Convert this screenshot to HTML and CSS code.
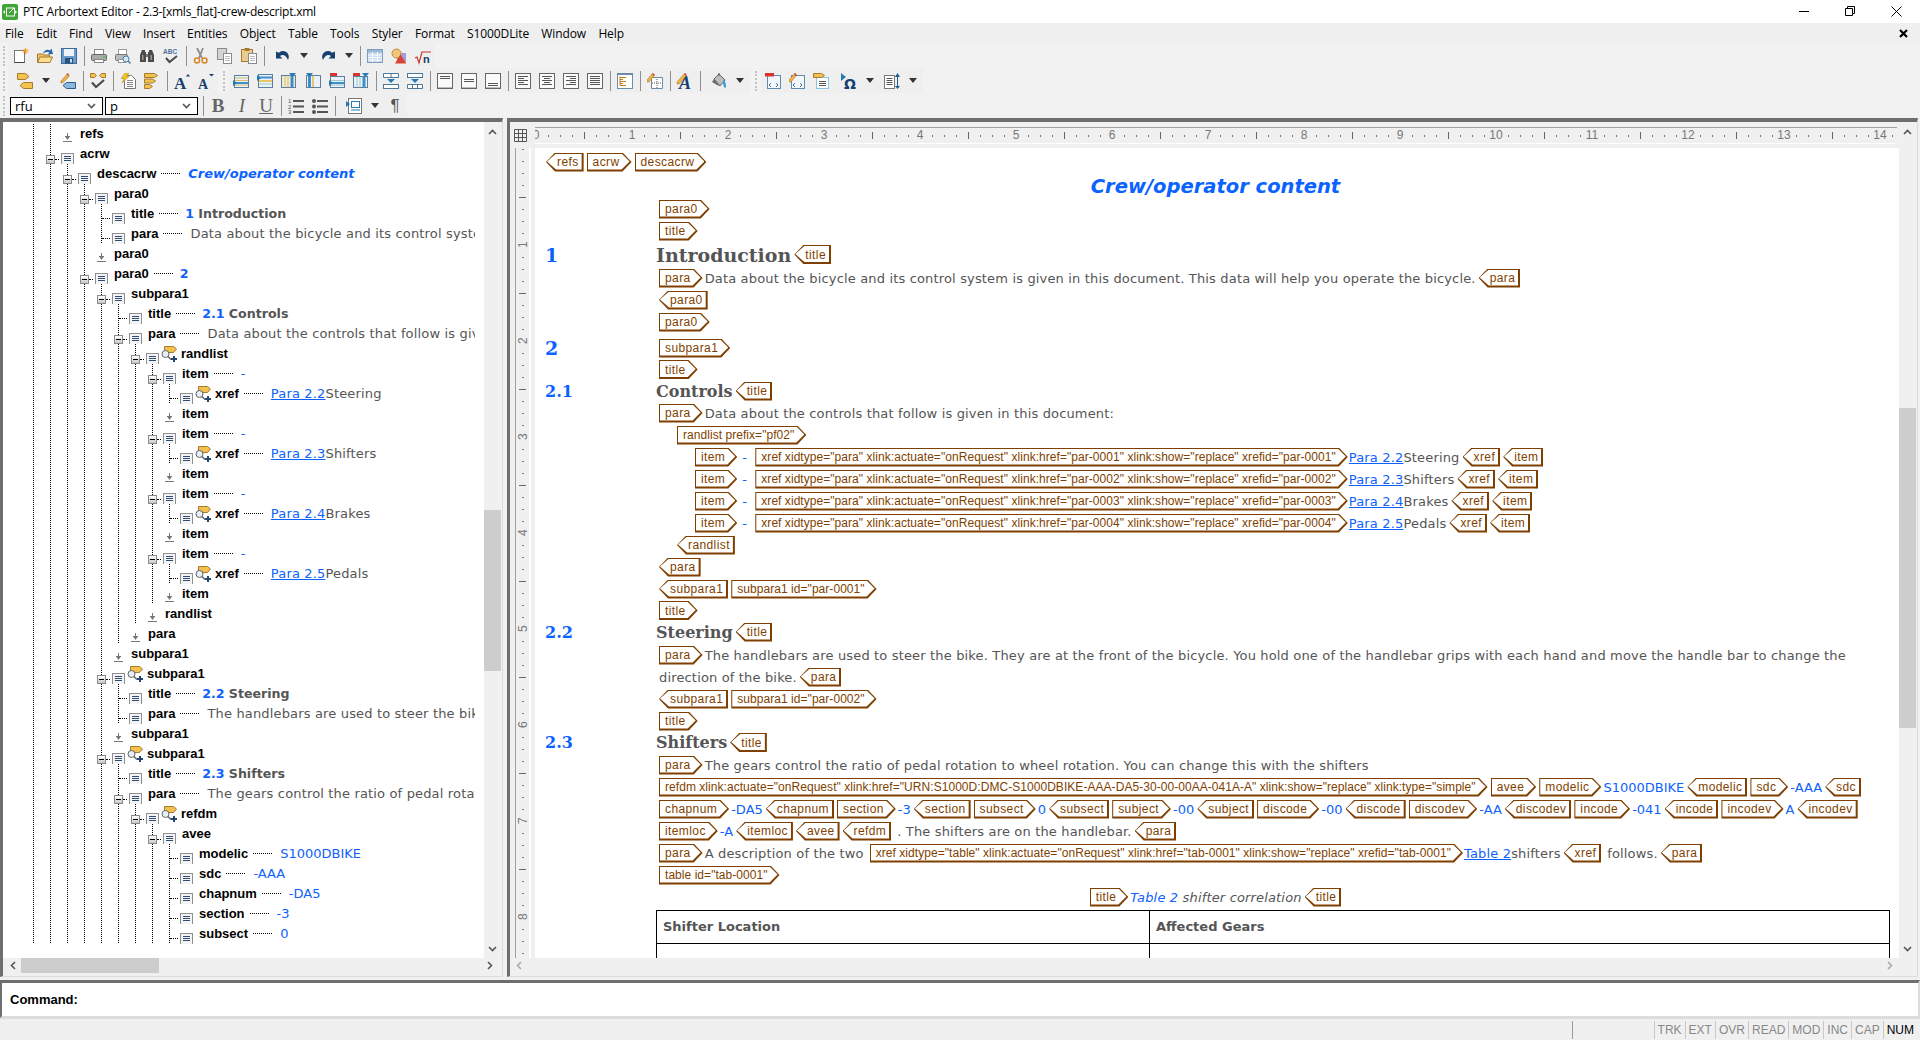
FILE: index.html
```html
<!DOCTYPE html>
<html lang="en">
<head>
    <meta charset="UTF-8">
    <title>PTC Arbortext Editor - 2.3-[xmls_flat]-crew-descript.xml</title>
    <link rel="stylesheet" href="styles.css">
</head>
<body>
<svg class="defs" width="0" height="0">
    <symbol id="i-new" viewBox="0 0 16 16"><rect x="1.500" y="2.500" width="10" height="12" fill="#fff" stroke="#777"/><path d="M1.500 14.500h10" stroke="#444"/><path d="M12.500 0v6M9.500 3h6M10.500 1l4 4M14.500 1l-4 4" stroke="#f39a1e"/></symbol>
    <symbol id="i-open" viewBox="0 0 16 16"><path d="M.5 6h5l1 1h6v7.500H.5z" fill="#eec165" stroke="#a9792c"/><path d="M.5 14.500l2.500-5.500h12.500l-2.500 5.500z" fill="#fbdc90" stroke="#a9792c"/><path d="M6 6c1-4 4.500-5 7-3.500L14.500.5 16 6l-5 .5 1.200-2c-2-1-4.200-.5-6.200 1.500z" fill="#2a6aa8"/></symbol>
    <symbol id="i-save" viewBox="0 0 16 16"><rect x=".5" y=".5" width="15" height="15" fill="#6a9bd0" stroke="#3e6c9c"/><rect x="3" y="1" width="10" height="7" fill="#eef3f9"/><rect x="4" y="10" width="8" height="5.500" fill="#28517c"/><rect x="9" y="11" width="2" height="3.500" fill="#cfdcea"/></symbol>
    <symbol id="i-print" viewBox="0 0 16 16"><rect x="3.500" y="1.500" width="9" height="5" fill="#fff" stroke="#888"/><rect x=".5" y="6.500" width="15" height="6" rx="1" fill="#aaa" stroke="#666"/><rect x="3.500" y="11.500" width="9" height="3" fill="#fff" stroke="#888"/><rect x="12" y="8" width="2" height="1.500" fill="#5b5"/></symbol>
    <symbol id="i-preview" viewBox="0 0 16 16"><rect x="3.500" y="1.500" width="8" height="5" fill="#fff" stroke="#999"/><rect x=".5" y="6.500" width="12" height="6" rx="1" fill="#bbb" stroke="#777"/><rect x="3.500" y="11.500" width="7" height="3" fill="#fff" stroke="#999"/><circle cx="11" cy="11" r="3" fill="#d6e8f6" stroke="#4a7ea8"/><path d="M13 13l2.500 2.500" stroke="#4a7ea8" stroke-width="1.500"/></symbol>
    <symbol id="i-binoc" viewBox="0 0 16 16"><path d="M3 2h3v2h1v10H1V7z" fill="#4b4b4b"/><path d="M13 2h-3v2H9v10h6V7z" fill="#4b4b4b"/><rect x="7" y="6" width="2" height="3" fill="#777"/><rect x="3" y="7" width="1.500" height="5" fill="#999"/><rect x="11.500" y="7" width="1.500" height="5" fill="#999"/></symbol>
    <symbol id="i-cut" viewBox="0 0 16 16"><path d="M4 0l5 10M10 0L6 10" stroke="#8d8d8d" stroke-width="1.800"/><circle cx="4" cy="12.500" r="2.500" fill="none" stroke="#d8862a" stroke-width="1.500"/><circle cx="11.500" cy="12.500" r="2.500" fill="none" stroke="#d8862a" stroke-width="1.500"/></symbol>
    <symbol id="i-copy" viewBox="0 0 16 16"><rect x=".5" y=".5" width="9" height="11" fill="#d4d4d4" stroke="#8a8a8a"/><rect x="6.500" y="5.500" width="8" height="10" fill="#fff" stroke="#8a8a8a"/><path d="M8 8.500h5M8 10.500h5M8 12.500h5" stroke="#bbb"/></symbol>
    <symbol id="i-paste" viewBox="0 0 16 16"><rect x=".5" y="1.500" width="11" height="12" fill="#eccb8e" stroke="#a87a30"/><rect x="3.500" y="0" width="5" height="3" fill="#a87a30"/><rect x="7.500" y="5.500" width="8" height="10" fill="#fff" stroke="#8a8a8a"/><path d="M9 8.500h5M9 10.500h5M9 12.500h5" stroke="#bbb"/></symbol>
    <symbol id="i-undo" viewBox="0 0 16 16"><path d="M1 3.500v7h6.500L5 8c2.500-1.800 6-1 8 4 2.500-5-1-9-5-9-1.500 0-3 .5-4 1.800z" fill="#17406f"/></symbol>
    <symbol id="i-redo" viewBox="0 0 16 16"><path d="M15 3.500v7H8.500L11 8C8.500 6.200 5 7 3 12 .5 7 4 3 8 3c1.500 0 3 .5 4 1.800z" fill="#17406f"/></symbol>
    <symbol id="i-table" viewBox="0 0 16 16"><rect x=".5" y="1.500" width="15" height="13" fill="#c6daf0" stroke="#7f9cbc"/><rect x="1" y="2" width="14" height="2.500" fill="#98b8da"/><path d="M1 7h14M1 9.500h14M1 12h14M5.500 4v10M10.500 4v10" stroke="#fff"/></symbol>
    <symbol id="i-object" viewBox="0 0 16 16"><rect x="6" y="5" width="9" height="10" fill="#a79ad6"/><circle cx="5.500" cy="5.500" r="4.500" fill="#f2c679" stroke="#c08a35"/><path d="M4 15.500l5.500-9 5.500 9z" fill="#d9432f"/></symbol>
    <symbol id="i-tags" viewBox="0 0 16 16"><path d="M.5 .5h8l3.500 3-3.500 3h-8z" fill="#f2c14e" stroke="#a87a30"/><path d="M15.500 9.500h-9L3 12.500l3.500 3h9z" fill="#f2c14e" stroke="#a87a30"/></symbol>
    <symbol id="i-pentag" viewBox="0 0 16 16"><path d="M15.500 9.500h-9L3 12.500l3.500 3h9z" fill="#8db7dc" stroke="#2f5f8a"/><path d="M1 8l6-6.500 2 2L3 9.500 1 10z" fill="#f2b544" stroke="#9a6a1e" stroke-width=".6"/><path d="M6.500 1l1-1 2 2-1 1z" fill="#d9432f"/></symbol>
    <symbol id="i-checktags" viewBox="0 0 16 16"><path d="M.5 .5h4l2 2-2 2h-4z" fill="#f2c14e" stroke="#a87a30"/><path d="M15.500 .5h-4l-2 2 2 2h4z" fill="#f2c14e" stroke="#a87a30"/><path d="M2 9.500l4 4.500 8-7" fill="none" stroke="#4a4a4a" stroke-width="2.200"/></symbol>
    <symbol id="i-bolt" viewBox="0 0 16 16"><path d="M4.500 2.500h7l4 4v9h-11z" fill="#fff" stroke="#777"/><path d="M7 7.500h6M7 9.500h6M7 11.500h6M7 13.500h6" stroke="#888"/><path d="M5 0h4L6.500 3.500H9L2 10l2-4.500H1z" fill="#f5c518" stroke="#a87a30" stroke-width=".5"/></symbol>
    <symbol id="i-taglist" viewBox="0 0 16 16"><path d="M.5 .5h10l3 2-3 2H.5z" fill="#f2c14e" stroke="#a87a30"/><path d="M.5 6h8l3 2-3 2h-8z" fill="#f2c14e" stroke="#a87a30"/><path d="M.5 11.500h5l3 2-3 2h-5z" fill="#f2c14e" stroke="#a87a30"/></symbol>
    <symbol id="i-row1" viewBox="0 0 16 16"><rect x="1.500" y="2.500" width="14" height="12" fill="#eaf1f8" stroke="#5c7f9f"/><path d="M2 5h13M2 7.500h13M2 12h13" stroke="#d8ba64"/><path d="M2 10h13" stroke="#3e8ecb" stroke-width="2"/><path d="M0 7l4 3-4 3z" fill="#2679b5"/></symbol>
    <symbol id="i-row2" viewBox="0 0 16 16"><rect x="1.500" y="1.500" width="14" height="13" fill="#eaf1f8" stroke="#5c7f9f"/><path d="M2 4.500h13" stroke="#3e8ecb" stroke-width="2"/><path d="M2 8h13" stroke="#e8c768" stroke-width="2"/><path d="M2 11h13" stroke="#9cc"/><path d="M0 2l4 3-4 3z" fill="#2679b5"/></symbol>
    <symbol id="i-col1" viewBox="0 0 16 16"><rect x=".5" y="2.500" width="14" height="12" fill="#f2ecd6" stroke="#5c7f9f"/><path d="M4 3v11M7 3v11" stroke="#d8ba64"/><path d="M11 3v11" stroke="#3e8ecb" stroke-width="3"/><path d="M8 0h7l-3.500 4z" fill="#2679b5"/></symbol>
    <symbol id="i-col2" viewBox="0 0 16 16"><rect x="1.500" y="2.500" width="14" height="12" fill="#eaf1f8" stroke="#5c7f9f"/><path d="M4.500 3v11" stroke="#3e8ecb" stroke-width="3"/><path d="M8 3v11" stroke="#e8c768" stroke-width="2"/><path d="M1 0h7L4.500 4z" fill="#2679b5"/></symbol>
    <symbol id="i-row3" viewBox="0 0 16 16"><rect x="1.500" y="3.500" width="14" height="11" fill="#eaf1f8" stroke="#5c7f9f"/><path d="M2 7.500h13M2 12h13" stroke="#9cc"/><path d="M2 10h13" stroke="#3e8ecb" stroke-width="2"/><path d="M0 7l4 3-4 3z" fill="#2679b5"/><rect x="1" y="0" width="7" height="3" fill="#d9332f"/></symbol>
    <symbol id="i-col3" viewBox="0 0 16 16"><rect x=".5" y="3.500" width="14" height="11" fill="#eaf1f8" stroke="#5c7f9f"/><path d="M4 4v10M7 4v10" stroke="#9cc"/><path d="M11 4v10" stroke="#3e8ecb" stroke-width="3"/><path d="M9 0h7l-3.500 4z" fill="#2679b5"/><rect x="0" y="0" width="7" height="3" fill="#d9332f"/></symbol>
    <symbol id="i-split1" viewBox="0 0 16 16"><path d="M.5 .5h15v4H.5zM8 .5v4" fill="#fff" stroke="#4a7896"/><rect x=".5" y="11.500" width="15" height="4" fill="#fff" stroke="#4a7896"/><path d="M4 6h8l-4 4z" fill="#2679b5"/></symbol>
    <symbol id="i-split2" viewBox="0 0 16 16"><rect x=".5" y=".5" width="15" height="4" fill="#fff" stroke="#4a7896"/><path d="M.5 11.500h15v4H.5zM5.500 11.500v4M10.500 11.500v4" fill="#fff" stroke="#4a7896"/><path d="M4 6h8l-4 4z" fill="#2679b5"/></symbol>
    <symbol id="i-vt" viewBox="0 0 16 16"><rect x=".5" y=".5" width="15" height="15" fill="#fafafa" stroke="#666"/><path d="M3 3.500h10M3 5.500h10" stroke="#555"/><path d="M1 14.500h14" stroke="#bbb"/></symbol>
    <symbol id="i-vm" viewBox="0 0 16 16"><rect x=".5" y=".5" width="15" height="15" fill="#fafafa" stroke="#666"/><path d="M3 6.500h10M3 8.500h10" stroke="#555"/><path d="M1 14.500h14" stroke="#bbb"/></symbol>
    <symbol id="i-vb" viewBox="0 0 16 16"><rect x=".5" y=".5" width="15" height="15" fill="#fafafa" stroke="#666"/><path d="M3 10.500h10M3 12.500h10" stroke="#555"/><path d="M1 14.500h14" stroke="#bbb"/></symbol>
    <symbol id="i-al" viewBox="0 0 16 16"><rect x=".5" y=".5" width="15" height="15" fill="#fafafa" stroke="#666"/><path d="M3 3.500h10M3 5.500h6M3 7.500h10M3 9.500h6M3 11.500h10" stroke="#555"/></symbol>
    <symbol id="i-ac" viewBox="0 0 16 16"><rect x=".5" y=".5" width="15" height="15" fill="#fafafa" stroke="#666"/><path d="M3 3.500h10M5 5.500h6M3 7.500h10M5 9.500h6M3 11.500h10" stroke="#555"/></symbol>
    <symbol id="i-ar" viewBox="0 0 16 16"><rect x=".5" y=".5" width="15" height="15" fill="#fafafa" stroke="#666"/><path d="M3 3.500h10M7 5.500h6M3 7.500h10M7 9.500h6M3 11.500h10" stroke="#555"/></symbol>
    <symbol id="i-aj" viewBox="0 0 16 16"><rect x=".5" y=".5" width="15" height="15" fill="#fafafa" stroke="#666"/><path d="M3 3.500h10M3 5.500h10M3 7.500h10M3 9.500h10M3 11.500h10" stroke="#555"/></symbol>
    <symbol id="i-block" viewBox="0 0 16 16"><rect x=".5" y=".5" width="15" height="15" fill="#fff" stroke="#6d8aa6"/><path d="M1 1h14" stroke="#6d8aa6" stroke-width="2"/><path d="M3 3.500v9M3 4.500h6M3 6.500h3M3 8.500h6M3 10.500h3M3 12.500h6" stroke="#c27b1a"/></symbol>
    <symbol id="i-pentable" viewBox="0 0 16 16"><path d="M4.500 4.500h11v11h-11z" fill="#fff" stroke="#6d8aa6"/><path d="M10 6v9M5 10h10" stroke="#555" stroke-dasharray="1 1"/><path d="M0 7l5-6 2 2-5 6H0z" fill="#f2b544" stroke="#9a6a1e" stroke-width=".5"/><path d="M5 0.500l1-.5 2 2-1 1z" fill="#d9332f"/></symbol>
    <symbol id="i-bucket" viewBox="0 0 16 16"><path d="M3 6l5-5 6 6-5 6z" fill="#bdbdbd" stroke="#666"/><path d="M3 6l6 7-3-1-5-3z" fill="#6a6a6a"/><path d="M8 3V0" stroke="#555"/><path d="M12 7c3 1 3.500 6 2.500 8-2 0-2.500-4-2.500-8z" fill="#3a9bd8"/></symbol>
    <symbol id="i-docdel" viewBox="0 0 16 16"><rect x="2.500" y="2.500" width="13" height="13" fill="#f2f7fb" stroke="#5f8bb0"/><path d="M6 10l-2 2 2 2M11 10l2 2-2 2" fill="none" stroke="#46779f"/><rect x="0" y="0" width="9" height="3.500" fill="#d9332f"/></symbol>
    <symbol id="i-docpen" viewBox="0 0 16 16"><rect x="2.500" y="2.500" width="13" height="13" fill="#f2f7fb" stroke="#5f8bb0"/><path d="M6 10l-2 2 2 2M11 10l2 2-2 2" fill="none" stroke="#46779f"/><path d="M0 7l5-6 2 2-5 6H0z" fill="#f2b544" stroke="#9a6a1e" stroke-width=".5"/><path d="M5 .5l1-.5 2 2-1 1z" fill="#d9332f"/></symbol>
    <symbol id="i-tagbox" viewBox="0 0 16 16"><rect x="3.500" y="4.500" width="12" height="11" fill="#fff" stroke="#1f8fd0" stroke-dasharray="1 1"/><path d="M6 8.500h7M6 10.500h7M6 12.500h7" stroke="#555"/><path d="M.5 .5h8l3 2-3 2h-8z" fill="#f2c14e" stroke="#a87a30"/></symbol>
    <symbol id="i-spacing" viewBox="0 0 16 16"><rect x=".5" y="2.500" width="10" height="13" fill="#fff" stroke="#777"/><path d="M2.500 5.500h6M2.500 7.500h6M2.500 9.500h6M2.500 11.500h6" stroke="#555"/><path d="M13.500 2v12" stroke="#1d5f8a"/><path d="M11 4l2.500-4L16 4zM11 13h5l-2.500 3z" fill="#1d5f8a"/></symbol>
    <symbol id="i-indent" viewBox="0 0 16 16"><rect x="2.500" y=".5" width="13" height="15" fill="#fff" stroke="#777"/><rect x="5.500" y="3.500" width="8" height="6" fill="none" stroke="#2679b5"/><path d="M5 12h9" stroke="#2679b5"/><path d="M0 3l4 3-4 3z" fill="#2679b5"/></symbol>
    <symbol id="i-ul" viewBox="0 0 16 16"><circle cx="2" cy="3" r="2" fill="#555"/><circle cx="2" cy="8.500" r="2" fill="#555"/><circle cx="2" cy="14" r="2" fill="#555"/><path d="M5 3h11M5 8.500h11M5 14h11" stroke="#555" stroke-width="2"/></symbol>
    <symbol id="i-node" viewBox="0 0 13 12"><rect x=".5" y=".5" width="12" height="11" fill="#f4f4f4" stroke="#8f8f8f"/><path d="M.5 11.500h12" stroke="#666"/><path d="M3 3.500h7M3 5.500h7M3 7.500h7" stroke="#2d4a78"/></symbol>
    <symbol id="i-mag" viewBox="0 0 16 16"><path d="M3.500 .5h9l3 2.500-3 3.500h-9z" fill="#f2c14e" stroke="#a87a30"/><circle cx="4.500" cy="8" r="3.500" fill="#e6eef6" stroke="#666"/><path d="M7 10.500l3 3" stroke="#666" stroke-width="1.500"/><path d="M13 10v6M10 13h6" stroke="#24476f" stroke-width="2"/></symbol>
    <symbol id="i-end" viewBox="0 0 9 9"><path d="M0 8.500h9M2 3.500h5M4.500 0v3" stroke="#777"/><path d="M2 3.500h5L4.500 7z" fill="#777"/></symbol>
    <symbol id="c-up" viewBox="0 0 9 6"><path d="M1 5l3.500-3.500L8 5" fill="none" stroke="#555" stroke-width="1.600"/></symbol>
    <symbol id="c-down" viewBox="0 0 9 6"><path d="M1 1l3.500 3.500L8 1" fill="none" stroke="#555" stroke-width="1.600"/></symbol>
    <symbol id="c-left" viewBox="0 0 6 9"><path d="M5 1L1.500 4.500 5 8" fill="none" stroke="#555" stroke-width="1.600"/></symbol>
    <symbol id="c-right" viewBox="0 0 6 9"><path d="M1 1l3.500 3.500L1 8" fill="none" stroke="#555" stroke-width="1.600"/></symbol>
</svg>

<div class="titlebar">
    <svg class="appicon" viewBox="0 0 16 16"><rect width="16" height="16" rx="2" fill="#3fa535"/><rect x="4.500" y="4" width="8" height="8" fill="none" stroke="#fff"/><path d="M1 8l2-2v4zM15 8l-2-2v4z" fill="#fff"/><path d="M7 9l5-5" stroke="#fff"/></svg>
    <span class="wintitle">PTC Arbortext Editor - 2.3-[xmls_flat]-crew-descript.xml</span>
    <div class="wincontrols">
        <span class="winbtn"><svg width="10" height="10"><path d="M0 5.500h10" stroke="#000"/></svg></span>
        <span class="winbtn"><svg width="10" height="10"><path d="M.5 2.500h7v7h-7zM2.500 2.500v-2h7v7h-2" fill="none" stroke="#000"/></svg></span>
        <span class="winbtn"><svg width="11" height="11"><path d="M.5 .5l10 10M10.500 .5l-10 10" stroke="#000"/></svg></span>
    </div>
</div>

<div class="menubar">
    <span>File</span><span>Edit</span><span>Find</span><span>View</span><span>Insert</span><span>Entities</span><span>Object</span><span>Table</span><span>Tools</span><span>Styler</span><span>Format</span><span>S1000DLite</span><span>Window</span><span>Help</span>
    <svg class="docclose" width="9" height="9"><path d="M1 1l7 7M8 1L1 8" stroke="#000" stroke-width="2.200"/></svg>
</div>

<div class="toolbars">
    <div class="tbrow">
        <i class="grip"></i>
        <div class="tb tb1">
            <span class="tool"><svg><use href="#i-new"/></svg></span><span class="tool"><svg><use href="#i-open"/></svg></span><span class="tool"><svg><use href="#i-save"/></svg></span>
            <i class="sep"></i>
            <span class="tool"><svg><use href="#i-print"/></svg></span><span class="tool"><svg><use href="#i-preview"/></svg></span><span class="tool"><svg><use href="#i-binoc"/></svg></span><span class="tool"><svg viewBox="0 0 16 16"><text x="0" y="6" class="svg-abc">ABC</text><path d="M3 10l3.500 4L14 8" fill="none" stroke="#4a4a4a" stroke-width="2"/></svg></span>
            <i class="sep"></i>
            <span class="tool"><svg><use href="#i-cut"/></svg></span><span class="tool"><svg><use href="#i-copy"/></svg></span><span class="tool"><svg><use href="#i-paste"/></svg></span>
            <i class="sep"></i>
            <span class="tool wide"><svg><use href="#i-undo"/></svg></span><i class="drop long"></i><span class="tool"><svg><use href="#i-redo"/></svg></span><i class="drop tight"></i>
            <i class="sep"></i>
            <span class="tool"><svg><use href="#i-table"/></svg></span><span class="tool"><svg><use href="#i-object"/></svg></span><span class="tool"><svg viewBox="0 0 16 16"><path d="M0 10l2-1 2 6L7 4h9" fill="none" stroke="#c0392b" stroke-width="1.200"/><text x="8" y="14.500" class="svg-n">n</text></svg></span>
        </div>
    </div>
    <div class="tbrow">
        <i class="grip"></i>
        <div class="tb tb2">
            <span class="tool"><svg><use href="#i-tags"/></svg></span><i class="drop"></i><span class="tool"><svg><use href="#i-pentag"/></svg></span>
            <i class="sep"></i>
            <span class="tool"><svg><use href="#i-checktags"/></svg></span>
            <i class="sep"></i>
            <span class="tool"><svg><use href="#i-bolt"/></svg></span><span class="tool"><svg><use href="#i-taglist"/></svg></span>
            <i class="sep"></i>
            <span class="tool"><svg viewBox="0 0 16 16"><text x="0" y="15.500" class="svg-a">A</text><path d="M12 3.500l2-2.500 2 2.500z" fill="#17406f"/></svg></span><span class="tool"><svg viewBox="0 0 16 16"><text x="0" y="15.500" class="svg-a2">A</text><path d="M11 1h5l-2.500 2.500z" fill="#17406f"/></svg></span>
        </div>
        <i class="grip gap"></i>
        <div class="tb tb3">
            <span class="tool"><svg><use href="#i-row1"/></svg></span><span class="tool"><svg><use href="#i-row2"/></svg></span><span class="tool"><svg><use href="#i-col1"/></svg></span><span class="tool"><svg><use href="#i-col2"/></svg></span><span class="tool"><svg><use href="#i-row3"/></svg></span><span class="tool"><svg><use href="#i-col3"/></svg></span>
            <i class="sep"></i>
            <span class="tool"><svg><use href="#i-split1"/></svg></span><span class="tool"><svg><use href="#i-split2"/></svg></span>
            <i class="sep"></i>
            <span class="tool"><svg><use href="#i-vt"/></svg></span><span class="tool"><svg><use href="#i-vm"/></svg></span><span class="tool"><svg><use href="#i-vb"/></svg></span>
            <i class="sep"></i>
            <span class="tool"><svg><use href="#i-al"/></svg></span><span class="tool"><svg><use href="#i-ac"/></svg></span><span class="tool"><svg><use href="#i-ar"/></svg></span><span class="tool"><svg><use href="#i-aj"/></svg></span>
            <i class="sep"></i>
            <span class="tool"><svg><use href="#i-block"/></svg></span>
            <i class="sep"></i>
            <span class="tool"><svg><use href="#i-pentable"/></svg></span>
            <i class="sep"></i>
            <span class="tool"><svg viewBox="0 0 16 16"><text x="2" y="15.500" class="svg-ai">A</text><path d="M0 9l7-8 2 2-7 8H0z" fill="#f2b544" stroke="#9a6a1e" stroke-width=".5"/><path d="M7 .500l1-.5 2 2-1 1z" fill="#d9332f"/></svg></span>
            <i class="sep"></i>
            <span class="tool wide"><svg><use href="#i-bucket"/></svg></span><i class="drop"></i>
        </div>
        <i class="grip gap"></i>
        <div class="tb tb4">
            <span class="tool"><svg><use href="#i-docdel"/></svg></span><span class="tool"><svg><use href="#i-docpen"/></svg></span><span class="tool"><svg><use href="#i-tagbox"/></svg></span><span class="tool wide"><svg viewBox="0 0 16 16"><path d="M0 0l5 4-5 4z" fill="#2679b5"/><text x="3" y="16" class="svg-om">Ω</text></svg></span><i class="drop"></i><span class="tool"><svg><use href="#i-spacing"/></svg></span><i class="drop"></i>
        </div>
    </div>
    <div class="tbrow">
        <i class="grip"></i>
        <div class="tb tb5">
            <div class="combo"><span>rfu</span><svg width="9" height="6"><use href="#c-down"/></svg></div>
            <div class="combo"><span>p</span><svg width="9" height="6"><use href="#c-down"/></svg></div>
            <i class="sep"></i>
            <span class="tool fmt bold">B</span><span class="tool fmt ital">I</span><span class="tool fmt under">U</span>
            <i class="sep"></i>
            <span class="tool"><svg viewBox="0 0 16 16"><text x="0" y="5" class="svg-num">1</text><text x="0" y="10.500" class="svg-num">2</text><text x="0" y="16" class="svg-num">3</text><path d="M5 3h11M5 8.500h11M5 14h11" stroke="#555" stroke-width="2"/></svg></span><span class="tool"><svg><use href="#i-ul"/></svg></span>
            <i class="sep"></i>
            <span class="tool wide"><svg><use href="#i-indent"/></svg></span><i class="drop"></i>
            <span class="tool fmt pilcrow">¶</span>
        </div>
    </div>
</div>

<div class="workspace">
    <div class="pane tree-pane">
        <div class="pane-top">
            <div class="tree">
                <div class="row"><i class="g"></i><i class="g"></i><i class="mk"><svg><use href="#i-end"/></svg></i><b class="lb">refs</b></div>
                <div class="row"><i class="g"></i><i class="x"><b></b></i><i class="n"><svg><use href="#i-node"/></svg></i><b class="lb">acrw</b></div>
                <div class="row"><i class="g"></i><i class="g"></i><i class="x"><b></b></i><i class="n"><svg><use href="#i-node"/></svg></i><b class="lb">descacrw</b><i class="lead"></i><span class="val title-val">Crew/operator content</span></div>
                <div class="row"><i class="g"></i><i class="g"></i><i class="g"></i><i class="x"><b></b></i><i class="n"><svg><use href="#i-node"/></svg></i><b class="lb">para0</b></div>
                <div class="row"><i class="g"></i><i class="g"></i><i class="g"></i><i class="g"></i><i class="h"></i><i class="n"><svg><use href="#i-node"/></svg></i><b class="lb">title</b><i class="lead"></i><span class="val bd"><span class="blue">1</span> Introduction</span></div>
                <div class="row"><i class="g"></i><i class="g"></i><i class="g"></i><i class="g"></i><i class="h"></i><i class="n"><svg><use href="#i-node"/></svg></i><b class="lb">para</b><i class="lead"></i><span class="val">Data about the bicycle and its control system is given</span></div>
                <div class="row"><i class="g"></i><i class="g"></i><i class="g"></i><i class="g"></i><i class="mk"><svg><use href="#i-end"/></svg></i><b class="lb">para0</b></div>
                <div class="row"><i class="g"></i><i class="g"></i><i class="g"></i><i class="x"><b></b></i><i class="n"><svg><use href="#i-node"/></svg></i><b class="lb">para0</b><i class="lead"></i><span class="val bd blue">2</span></div>
                <div class="row"><i class="g"></i><i class="g"></i><i class="g"></i><i class="g"></i><i class="x"><b></b></i><i class="n"><svg><use href="#i-node"/></svg></i><b class="lb">subpara1</b></div>
                <div class="row"><i class="g"></i><i class="g"></i><i class="g"></i><i class="g"></i><i class="g"></i><i class="h"></i><i class="n"><svg><use href="#i-node"/></svg></i><b class="lb">title</b><i class="lead"></i><span class="val bd"><span class="blue">2.1</span> Controls</span></div>
                <div class="row"><i class="g"></i><i class="g"></i><i class="g"></i><i class="g"></i><i class="g"></i><i class="x"><b></b></i><i class="n"><svg><use href="#i-node"/></svg></i><b class="lb">para</b><i class="lead"></i><span class="val">Data about the controls that follow is given in this</span></div>
                <div class="row"><i class="g"></i><i class="g"></i><i class="g"></i><i class="g"></i><i class="g"></i><i class="g"></i><i class="x"><b></b></i><i class="n"><svg><use href="#i-node"/></svg></i><svg class="mag"><use href="#i-mag"/></svg><b class="lb">randlist</b></div>
                <div class="row"><i class="g"></i><i class="g"></i><i class="g"></i><i class="g"></i><i class="g"></i><i class="g"></i><i class="g"></i><i class="x"><b></b></i><i class="n"><svg><use href="#i-node"/></svg></i><b class="lb">item</b><i class="lead"></i><span class="val blue">-</span></div>
                <div class="row"><i class="g"></i><i class="g"></i><i class="g"></i><i class="g"></i><i class="g"></i><i class="g"></i><i class="g"></i><i class="g"></i><i class="h"></i><i class="n"><svg><use href="#i-node"/></svg></i><svg class="mag"><use href="#i-mag"/></svg><b class="lb">xref</b><i class="lead"></i><span class="val"><u class="link">Para 2.2</u>Steering</span></div>
                <div class="row"><i class="g"></i><i class="g"></i><i class="g"></i><i class="g"></i><i class="g"></i><i class="g"></i><i class="g"></i><i class="g"></i><i class="mk"><svg><use href="#i-end"/></svg></i><b class="lb">item</b></div>
                <div class="row"><i class="g"></i><i class="g"></i><i class="g"></i><i class="g"></i><i class="g"></i><i class="g"></i><i class="g"></i><i class="x"><b></b></i><i class="n"><svg><use href="#i-node"/></svg></i><b class="lb">item</b><i class="lead"></i><span class="val blue">-</span></div>
                <div class="row"><i class="g"></i><i class="g"></i><i class="g"></i><i class="g"></i><i class="g"></i><i class="g"></i><i class="g"></i><i class="g"></i><i class="h"></i><i class="n"><svg><use href="#i-node"/></svg></i><svg class="mag"><use href="#i-mag"/></svg><b class="lb">xref</b><i class="lead"></i><span class="val"><u class="link">Para 2.3</u>Shifters</span></div>
                <div class="row"><i class="g"></i><i class="g"></i><i class="g"></i><i class="g"></i><i class="g"></i><i class="g"></i><i class="g"></i><i class="g"></i><i class="mk"><svg><use href="#i-end"/></svg></i><b class="lb">item</b></div>
                <div class="row"><i class="g"></i><i class="g"></i><i class="g"></i><i class="g"></i><i class="g"></i><i class="g"></i><i class="g"></i><i class="x"><b></b></i><i class="n"><svg><use href="#i-node"/></svg></i><b class="lb">item</b><i class="lead"></i><span class="val blue">-</span></div>
                <div class="row"><i class="g"></i><i class="g"></i><i class="g"></i><i class="g"></i><i class="g"></i><i class="g"></i><i class="g"></i><i class="g"></i><i class="h"></i><i class="n"><svg><use href="#i-node"/></svg></i><svg class="mag"><use href="#i-mag"/></svg><b class="lb">xref</b><i class="lead"></i><span class="val"><u class="link">Para 2.4</u>Brakes</span></div>
                <div class="row"><i class="g"></i><i class="g"></i><i class="g"></i><i class="g"></i><i class="g"></i><i class="g"></i><i class="g"></i><i class="g"></i><i class="mk"><svg><use href="#i-end"/></svg></i><b class="lb">item</b></div>
                <div class="row"><i class="g"></i><i class="g"></i><i class="g"></i><i class="g"></i><i class="g"></i><i class="g"></i><i class="g"></i><i class="x"><b></b></i><i class="n"><svg><use href="#i-node"/></svg></i><b class="lb">item</b><i class="lead"></i><span class="val blue">-</span></div>
                <div class="row"><i class="g"></i><i class="g"></i><i class="g"></i><i class="g"></i><i class="g"></i><i class="g"></i><i class="g"></i><i class="g"></i><i class="h"></i><i class="n"><svg><use href="#i-node"/></svg></i><svg class="mag"><use href="#i-mag"/></svg><b class="lb">xref</b><i class="lead"></i><span class="val"><u class="link">Para 2.5</u>Pedals</span></div>
                <div class="row"><i class="g"></i><i class="g"></i><i class="g"></i><i class="g"></i><i class="g"></i><i class="g"></i><i class="g"></i><i class="g"></i><i class="mk"><svg><use href="#i-end"/></svg></i><b class="lb">item</b></div>
                <div class="row"><i class="g"></i><i class="g"></i><i class="g"></i><i class="g"></i><i class="g"></i><i class="g"></i><i class="g"></i><i class="mk"><svg><use href="#i-end"/></svg></i><b class="lb">randlist</b></div>
                <div class="row"><i class="g"></i><i class="g"></i><i class="g"></i><i class="g"></i><i class="g"></i><i class="g"></i><i class="mk"><svg><use href="#i-end"/></svg></i><b class="lb">para</b></div>
                <div class="row"><i class="g"></i><i class="g"></i><i class="g"></i><i class="g"></i><i class="g"></i><i class="mk"><svg><use href="#i-end"/></svg></i><b class="lb">subpara1</b></div>
                <div class="row"><i class="g"></i><i class="g"></i><i class="g"></i><i class="g"></i><i class="x"><b></b></i><i class="n"><svg><use href="#i-node"/></svg></i><svg class="mag"><use href="#i-mag"/></svg><b class="lb">subpara1</b></div>
                <div class="row"><i class="g"></i><i class="g"></i><i class="g"></i><i class="g"></i><i class="g"></i><i class="h"></i><i class="n"><svg><use href="#i-node"/></svg></i><b class="lb">title</b><i class="lead"></i><span class="val bd"><span class="blue">2.2</span> Steering</span></div>
                <div class="row"><i class="g"></i><i class="g"></i><i class="g"></i><i class="g"></i><i class="g"></i><i class="h"></i><i class="n"><svg><use href="#i-node"/></svg></i><b class="lb">para</b><i class="lead"></i><span class="val">The handlebars are used to steer the bike. They are</span></div>
                <div class="row"><i class="g"></i><i class="g"></i><i class="g"></i><i class="g"></i><i class="g"></i><i class="mk"><svg><use href="#i-end"/></svg></i><b class="lb">subpara1</b></div>
                <div class="row"><i class="g"></i><i class="g"></i><i class="g"></i><i class="g"></i><i class="x"><b></b></i><i class="n"><svg><use href="#i-node"/></svg></i><svg class="mag"><use href="#i-mag"/></svg><b class="lb">subpara1</b></div>
                <div class="row"><i class="g"></i><i class="g"></i><i class="g"></i><i class="g"></i><i class="g"></i><i class="h"></i><i class="n"><svg><use href="#i-node"/></svg></i><b class="lb">title</b><i class="lead"></i><span class="val bd"><span class="blue">2.3</span> Shifters</span></div>
                <div class="row"><i class="g"></i><i class="g"></i><i class="g"></i><i class="g"></i><i class="g"></i><i class="x"><b></b></i><i class="n"><svg><use href="#i-node"/></svg></i><b class="lb">para</b><i class="lead"></i><span class="val">The gears control the ratio of pedal rotation to wheel</span></div>
                <div class="row"><i class="g"></i><i class="g"></i><i class="g"></i><i class="g"></i><i class="g"></i><i class="g"></i><i class="x"><b></b></i><i class="n"><svg><use href="#i-node"/></svg></i><svg class="mag"><use href="#i-mag"/></svg><b class="lb">refdm</b></div>
                <div class="row"><i class="g"></i><i class="g"></i><i class="g"></i><i class="g"></i><i class="g"></i><i class="g"></i><i class="g"></i><i class="x"><b></b></i><i class="n"><svg><use href="#i-node"/></svg></i><b class="lb">avee</b></div>
                <div class="row"><i class="g"></i><i class="g"></i><i class="g"></i><i class="g"></i><i class="g"></i><i class="g"></i><i class="g"></i><i class="g"></i><i class="h"></i><i class="n"><svg><use href="#i-node"/></svg></i><b class="lb">modelic</b><i class="lead"></i><span class="val blue">S1000DBIKE</span></div>
                <div class="row"><i class="g"></i><i class="g"></i><i class="g"></i><i class="g"></i><i class="g"></i><i class="g"></i><i class="g"></i><i class="g"></i><i class="h"></i><i class="n"><svg><use href="#i-node"/></svg></i><b class="lb">sdc</b><i class="lead"></i><span class="val blue">-AAA</span></div>
                <div class="row"><i class="g"></i><i class="g"></i><i class="g"></i><i class="g"></i><i class="g"></i><i class="g"></i><i class="g"></i><i class="g"></i><i class="h"></i><i class="n"><svg><use href="#i-node"/></svg></i><b class="lb">chapnum</b><i class="lead"></i><span class="val blue">-DA5</span></div>
                <div class="row"><i class="g"></i><i class="g"></i><i class="g"></i><i class="g"></i><i class="g"></i><i class="g"></i><i class="g"></i><i class="g"></i><i class="h"></i><i class="n"><svg><use href="#i-node"/></svg></i><b class="lb">section</b><i class="lead"></i><span class="val blue">-3</span></div>
                <div class="row"><i class="g"></i><i class="g"></i><i class="g"></i><i class="g"></i><i class="g"></i><i class="g"></i><i class="g"></i><i class="g"></i><i class="h"></i><i class="n"><svg><use href="#i-node"/></svg></i><b class="lb">subsect</b><i class="lead"></i><span class="val blue">0</span></div>
            </div>
            <div class="vbar">
                <svg class="chev" width="9" height="6"><use href="#c-up"/></svg>
                <div class="vthumb left-thumb"></div>
                <svg class="chev end" width="9" height="6"><use href="#c-down"/></svg>
            </div>
        </div>
        <div class="hbar">
            <svg class="chev" width="6" height="9"><use href="#c-left"/></svg>
            <div class="hthumb"></div>
            <svg class="chev end" width="6" height="9"><use href="#c-right"/></svg>
        </div>
    </div>

    <div class="pane doc-pane">
        <div class="pane-top">
            <div class="doc-body">
                <div class="ruler-row">
                    <div class="corner"><svg width="13" height="13"><path d="M.5 .5h12v12H.5zM.5 4.500h12M.5 8.500h12M4.500 .5v12M8.500 .5v12" fill="none" stroke="#555"/></svg></div>
                    <div class="hruler"><span>0</span><span>1</span><span>2</span><span>3</span><span>4</span><span>5</span><span>6</span><span>7</span><span>8</span><span>9</span><span>10</span><span>11</span><span>12</span><span>13</span><span>14</span></div>
                </div>
                <div class="doc-row">
                    <div class="vruler"><div class="vruler-in"><span>1</span><span>2</span><span>3</span><span>4</span><span>5</span><span>6</span><span>7</span><span>8</span></div></div>
                    <div class="doc">
                        <div class="ln top"><span class="tag e">refs</span><span class="tag s">acrw</span><span class="tag s">descacrw</span></div>
                        <div class="ln main-title">Crew/operator content</div>
                        <div class="ln ind"><span class="tag s">para0</span></div>
                        <div class="ln ind"><span class="tag s">title</span></div>
                        <div class="ln hd h1"><span class="num">1</span><span class="hd-text">Introduction</span><span class="tag e">title</span></div>
                        <div class="ln ind"><span class="tag s">para</span><span class="t">Data about the bicycle and its control system is given in this document. This data will help you operate the bicycle.</span><span class="tag e">para</span></div>
                        <div class="ln ind"><span class="tag e">para0</span></div>
                        <div class="ln ind"><span class="tag s">para0</span></div>
                        <div class="ln hd h2"><span class="num">2</span><span class="tag s">subpara1</span></div>
                        <div class="ln ind short"><span class="tag s">title</span></div>
                        <div class="ln hd h3"><span class="num sm">2.1</span><span class="hd-text sm">Controls</span><span class="tag e">title</span></div>
                        <div class="ln ind"><span class="tag s">para</span><span class="t">Data about the controls that follow is given in this document:</span></div>
                        <div class="ln ind2"><span class="tag s nar">randlist prefix="pf02"</span></div>
                        <div class="ln ind3"><span class="tag s">item</span><span class="t blue dash">-</span><span class="tag s nar">xref xidtype="para" xlink:actuate="onRequest" xlink:href="par-0001" xlink:show="replace" xrefid="par-0001"</span><span class="t"><u class="link">Para 2.2</u>Steering</span><span class="tag e">xref</span><span class="tag e">item</span></div>
                        <div class="ln ind3"><span class="tag s">item</span><span class="t blue dash">-</span><span class="tag s nar">xref xidtype="para" xlink:actuate="onRequest" xlink:href="par-0002" xlink:show="replace" xrefid="par-0002"</span><span class="t"><u class="link">Para 2.3</u>Shifters</span><span class="tag e">xref</span><span class="tag e">item</span></div>
                        <div class="ln ind3"><span class="tag s">item</span><span class="t blue dash">-</span><span class="tag s nar">xref xidtype="para" xlink:actuate="onRequest" xlink:href="par-0003" xlink:show="replace" xrefid="par-0003"</span><span class="t"><u class="link">Para 2.4</u>Brakes</span><span class="tag e">xref</span><span class="tag e">item</span></div>
                        <div class="ln ind3"><span class="tag s">item</span><span class="t blue dash">-</span><span class="tag s nar">xref xidtype="para" xlink:actuate="onRequest" xlink:href="par-0004" xlink:show="replace" xrefid="par-0004"</span><span class="t"><u class="link">Para 2.5</u>Pedals</span><span class="tag e">xref</span><span class="tag e">item</span></div>
                        <div class="ln ind2"><span class="tag e">randlist</span></div>
                        <div class="ln ind"><span class="tag e">para</span></div>
                        <div class="ln ind"><span class="tag e">subpara1</span><span class="tag s nar">subpara1 id="par-0001"</span></div>
                        <div class="ln ind short"><span class="tag s">title</span></div>
                        <div class="ln hd"><span class="num sm">2.2</span><span class="hd-text sm">Steering</span><span class="tag e">title</span></div>
                        <div class="ln ind push"><span class="tag s">para</span><span class="t">The handlebars are used to steer the bike. They are at the front of the bicycle. You hold one of the handlebar grips with each hand and move the handle bar to change the</span></div>
                        <div class="ln ind"><span class="t">direction of the bike.</span><span class="tag e">para</span></div>
                        <div class="ln ind"><span class="tag e">subpara1</span><span class="tag s nar">subpara1 id="par-0002"</span></div>
                        <div class="ln ind"><span class="tag s">title</span></div>
                        <div class="ln hd short"><span class="num sm">2.3</span><span class="hd-text sm">Shifters</span><span class="tag e">title</span></div>
                        <div class="ln ind push"><span class="tag s">para</span><span class="t">The gears control the ratio of pedal rotation to wheel rotation. You can change this with the shifters</span></div>
                        <div class="ln ind"><span class="tag s nar">refdm xlink:actuate="onRequest" xlink:href="URN:S1000D:DMC-S1000DBIKE-AAA-DA5-30-00-00AA-041A-A" xlink:show="replace" xlink:type="simple"</span><span class="tag s">avee</span><span class="tag s">modelic</span><span class="t blue">S1000DBIKE</span><span class="tag e">modelic</span><span class="tag s">sdc</span><span class="t blue">-AAA</span><span class="tag e">sdc</span></div>
                        <div class="ln ind"><span class="tag s">chapnum</span><span class="t blue">-DA5</span><span class="tag e">chapnum</span><span class="tag s">section</span><span class="t blue">-3</span><span class="tag e">section</span><span class="tag s">subsect</span><span class="t blue">0</span><span class="tag e">subsect</span><span class="tag s">subject</span><span class="t blue">-00</span><span class="tag e">subject</span><span class="tag s">discode</span><span class="t blue">-00</span><span class="tag e">discode</span><span class="tag s">discodev</span><span class="t blue">-AA</span><span class="tag e">discodev</span><span class="tag s">incode</span><span class="t blue">-041</span><span class="tag e">incode</span><span class="tag s">incodev</span><span class="t blue">A</span><span class="tag e">incodev</span></div>
                        <div class="ln ind"><span class="tag s">itemloc</span><span class="t blue">-A</span><span class="tag e">itemloc</span><span class="tag e">avee</span><span class="tag e">refdm</span><span class="t sp">. The shifters are on the handlebar.</span><span class="tag e">para</span></div>
                        <div class="ln ind"><span class="tag s">para</span><span class="t">A description of the two</span><span class="tag s nar sp">xref xidtype="table" xlink:actuate="onRequest" xlink:href="tab-0001" xlink:show="replace" xrefid="tab-0001"</span><span class="t"><u class="link">Table 2</u>shifters</span><span class="tag e">xref</span><span class="t sp">follows.</span><span class="tag e">para</span></div>
                        <div class="ln ind"><span class="tag s nar">table id="tab-0001"</span></div>
                        <div class="ln centered"><span class="tag s">title</span><span class="t cap"><span class="blue">Table 2</span> shifter correlation</span><span class="tag e">title</span></div>
                        <div class="shift-table">
                            <div class="cell">Shifter Location</div>
                            <div class="cell">Affected Gears</div>
                            <div class="cell"></div>
                            <div class="cell"></div>
                        </div>
                    </div>
                </div>
            </div>
            <div class="vbar doc-vbar">
                <svg class="chev" width="9" height="6"><use href="#c-up"/></svg>
                <div class="vthumb right-thumb"></div>
                <svg class="chev end" width="9" height="6"><use href="#c-down"/></svg>
            </div>
        </div>
        <div class="hbar doc-hbar">
            <svg class="chev faint" width="6" height="9"><use href="#c-left"/></svg>
            <svg class="chev end faint" width="6" height="9"><use href="#c-right"/></svg>
        </div>
    </div>
</div>

<div class="command"><b>Command:</b></div>

<div class="status">
    <span class="st-first"></span>
    <span>TRK</span><span>EXT</span><span>OVR</span><span>READ</span><span>MOD</span><span>INC</span><span>CAP</span><span class="on">NUM</span>
</div>
</body>
</html>
```

FILE: styles.css
```css
* {
    margin: 0;
    padding: 0;
    box-sizing: border-box;
}

body {
    width: 1920px;
    height: 1040px;
    overflow: hidden;
    background: #f0f0f0;
    display: flex;
    flex-direction: column;
    font-family: "Liberation Sans", Arial, sans-serif;
    color: #000;
}

.defs {
    position: absolute;
}

i {
    font-style: normal;
}

/* title + menu */
.titlebar {
    height: 23px;
    background: #fff;
    display: flex;
    align-items: center;
    flex: none;
}

.appicon {
    width: 16px;
    height: 16px;
    margin: 0 5px 0 2px;
}

.wintitle {
    font-family: "Open Sans", sans-serif;
    font-size: 12px;
    letter-spacing: -0.23px;
}

.wincontrols {
    margin-left: auto;
    margin-right: 1px;
    display: flex;
}

.winbtn {
    width: 46px;
    display: flex;
    justify-content: center;
}

.menubar {
    height: 20px;
    background: #efefef;
    display: flex;
    align-items: center;
    flex: none;
    padding-left: 5px;
    font-family: "Open Sans", sans-serif;
    font-size: 12px;
    letter-spacing: -0.1px;
}

.menubar span {
    margin-right: 12.3px;
}

.docclose {
    margin-left: auto;
    margin-right: 12px;
}

/* toolbars */
.toolbars {
    height: 75px;
    background: #f2f2f2;
    flex: none;
}

.tbrow {
    height: 25px;
    display: flex;
    align-items: center;
}

.grip {
    width: 3px;
    height: 20px;
    margin: 0 2px 0 3px;
    border-left: 2px dotted #c4c4c4;
    flex: none;
}

.grip.gap {
    margin: 0 3px 0 5px;
}

.tb {
    display: flex;
    align-items: center;
    height: 25px;
    background: #efefef;
}

.tool {
    width: 24px;
    height: 22px;
    display: flex;
    align-items: center;
    justify-content: center;
    flex: none;
}

.tool.wide {
    margin-left: 4px;
}

.tool svg {
    width: 16px;
    height: 16px;
    overflow: visible;
}

.sep {
    width: 1px;
    height: 20px;
    background: #8f8f8f;
    margin: 0 2px 0 3px;
    flex: none;
}

.drop {
    width: 0;
    height: 0;
    border: 4px solid transparent;
    border-top: 5px solid #333;
    border-bottom: 0;
    margin: 0 6px 0 5px;
    flex: none;
}

.drop.long {
    margin-right: 8px;
}

.drop.tight {
    margin-right: 4px;
}

.combo {
    width: 93px;
    height: 18px;
    border: 1px solid #000;
    background: #fff;
    margin-right: 2px;
    padding: 0 6px 0 4px;
    display: flex;
    align-items: center;
    justify-content: space-between;
    font-family: "Open Sans", sans-serif;
    font-size: 13px;
}

.tb1 {
    padding-left: 1px;
}

.tb2 {
    padding-left: 5px;
}

.tb5 {
    padding-left: 2px;
}

.fmt {
    font-family: "Liberation Serif", serif;
    font-size: 19px;
    color: #666;
}

.fmt.bold {
    font-weight: bold;
}

.fmt.ital {
    font-style: italic;
}

.fmt.under {
    text-decoration: underline;
}

.fmt.pilcrow {
    color: #555;
    margin-left: -2px;
    font-family: "Liberation Sans", sans-serif;
    font-size: 17px;
}

.svg-abc {
    font: bold 6.500px "Liberation Sans", sans-serif;
    fill: #4c6f96;
}

.svg-n {
    font: bold 11px "Liberation Sans", sans-serif;
    fill: #17406f;
}

.svg-a {
    font: bold 17px "Liberation Serif", serif;
    fill: #17406f;
}

.svg-a2 {
    font: bold 14px "Liberation Serif", serif;
    fill: #17406f;
}

.svg-ai {
    font: bold italic 18px "Liberation Serif", serif;
    fill: #17406f;
}

.svg-om {
    font: bold 14px "DejaVu Sans", sans-serif;
    fill: #17406f;
}

.svg-num {
    font: 6px "Liberation Sans", sans-serif;
    fill: #555;
}

/* split panes */
.workspace {
    height: 862px;
    flex: none;
    display: flex;
    align-items: flex-start;
}

.pane {
    height: 859px;
    border-top: 4px solid #6e6e6e;
    border-left: 3px solid #6e6e6e;
    border-right: 1px solid #dcdcdc;
    border-bottom: 1px solid #dcdcdc;
    display: flex;
    flex-direction: column;
    flex: none;
}

.tree-pane {
    width: 503px;
    margin-right: 4px;
}

.doc-pane {
    width: 1411px;
}

.pane-top {
    height: 836px;
    display: flex;
    flex: none;
}

.vbar {
    width: 17px;
    display: flex;
    flex-direction: column;
    align-items: center;
    flex: none;
    padding: 7px 0 6px;
}

.vthumb {
    width: 100%;
    background: #cdcdcd;
}

.left-thumb {
    height: 161px;
    margin-top: 375px;
}

.right-thumb {
    height: 320px;
    margin-top: 273px;
}

.chev {
    flex: none;
}

.vbar .chev.end {
    margin-top: auto;
}

.hbar .chev.end {
    margin-left: auto;
}

.hbar {
    height: 15px;
    display: flex;
    align-items: center;
    padding: 0 9px 0 7px;
    flex: none;
}

.hthumb {
    width: 138px;
    height: 15px;
    background: #cdcdcd;
    margin-left: 5px;
}

.doc-hbar {
    padding: 0 24px 0 6px;
}

.faint {
    opacity: 0.45;
}

/* outline tree */
.tree {
    width: 481px;
    height: 836px;
    background: #fff;
    padding: 2px 0 13px 22px;
    overflow: hidden;
    flex: none;
}

.row {
    height: 20px;
    display: flex;
    white-space: nowrap;
    width: 450px;
    overflow: hidden;
    align-items: center;
}

.g,
.x,
.h,
.n,
.mk {
    width: 17px;
    height: 20px;
    flex: none;
    display: block;
}

.g,
.x,
.h {
    background: linear-gradient(#000 50%, transparent 50%) 8px 0 / 1px 2px repeat-y;
}

.h {
    padding-top: 14px;
}

.h::after {
    content: "";
    display: block;
    width: 8px;
    margin-left: 9px;
    border-top: 1px dotted #000;
}

.x {
    padding: 11px 0 0 4px;
}

.x b {
    display: block;
    width: 9px;
    height: 9px;
    background: linear-gradient(#fff, #c8c8c8);
    border: 1px solid #8a8a8a;
    position: relative;
}

.x b::before {
    content: "";
    display: block;
    width: 5px;
    height: 1px;
    background: #000;
    margin: 3px 1px;
}

.x b::after {
    content: "";
    position: absolute;
    left: 8px;
    top: 3px;
    width: 4px;
    border-top: 1px dotted #000;
}

.n {
    padding: 9px 0 0 2px;
}

.n svg {
    display: block;
    width: 13px;
    height: 12px;
}

.mk {
    padding: 9px 0 0 4px;
}

.mk svg {
    display: block;
    width: 9px;
    height: 9px;
}

.mag {
    width: 16px;
    height: 16px;
    flex: none;
}

.lb {
    font-size: 13px;
    margin: 0 0 2px 4px;
    color: #000;
}

.lead {
    width: 19px;
    border-top: 1px dotted #000;
    margin: 0 8px 2px 5px;
    flex: none;
}

.val {
    font-family: "DejaVu Sans", sans-serif;
    font-size: 13px;
    letter-spacing: 0.16px;
    color: #555;
    margin-bottom: 2px;
}

.val.bd {
    font-size: 12.6px;
    font-weight: bold;
    letter-spacing: 0;
    margin-left: -1px;
}

.title-val {
    color: #0a62ff;
    font-weight: bold;
    font-style: italic;
    letter-spacing: 0;
}

.blue {
    color: #0e62fb;
}

.val.blue {
    color: #0e62fb;
    letter-spacing: 0;
}

.link {
    color: #0e62fb;
    text-decoration: underline;
}

/* rulers */
.doc-body {
    width: 1389px;
    display: flex;
    flex-direction: column;
    flex: none;
}

.ruler-row {
    height: 26px;
    display: flex;
    flex: none;
}

.corner {
    width: 25px;
    padding: 7px 0 0 4px;
    flex: none;
}

.corner svg {
    display: block;
}

.hruler {
    width: 1362px;
    height: 17px;
    margin-top: 5px;
    border-top: 1px solid #a0a0a0;
    border-bottom: 1px solid #fff;
    display: flex;
    overflow: hidden;
    background:
        linear-gradient(90deg, #666 1px, transparent 1px) 49px center / 96px 7px repeat-x,
        linear-gradient(90deg, #777 1px, transparent 1px) 1px center / 12px 2px repeat-x,
        #f0f0f0;
}

.hruler span {
    width: 96px;
    flex: none;
    text-align: center;
    font-size: 12px;
    line-height: 15px;
    color: #777;
    background: linear-gradient(#f0f0f0, #f0f0f0) center / 14px 100% no-repeat;
}

.hruler span:first-child {
    margin-left: -47px;
}

.doc-row {
    display: flex;
    height: 810px;
    flex: none;
}

.vruler {
    width: 25px;
    padding-left: 5px;
    flex: none;
}

.vruler-in {
    width: 16px;
    height: 100%;
    border-left: 1px solid #a0a0a0;
    border-right: 2px solid #fff;
    padding-top: 49px;
    overflow: hidden;
    background:
        linear-gradient(#666 1px, transparent 1px) center 49px / 7px 96px repeat-y,
        linear-gradient(#777 1px, transparent 1px) center 1px / 2px 12px repeat-y,
        #f0f0f0;
}

.vruler-in span {
    display: flex;
    height: 96px;
    align-items: center;
    justify-content: center;
    font-size: 12px;
    color: #777;
    writing-mode: vertical-lr;
    transform: rotate(180deg);
    background: linear-gradient(#f0f0f0, #f0f0f0) center / 100% 12px no-repeat;
}

/* document */
.doc {
    width: 1364px;
    background: #fff;
    overflow: hidden;
    padding: 3px 0 0 11px;
    flex: none;
}

.ln {
    height: 22px;
    display: flex;
    align-items: center;
    gap: 3px;
    white-space: nowrap;
}

.ln.short {
    height: 21px;
}

.ln.push {
    margin-top: 1px;
}

.ind {
    padding-left: 113px;
}

.ind2 {
    padding-left: 131px;
}

.ind3 {
    padding-left: 149px;
}

.tag {
    display: inline-flex;
    align-items: center;
    height: 19px;
    position: relative;
    background: #7f3f00;
    color: #7f3f00;
    font-size: 12px;
    letter-spacing: 0.4px;
    flex: none;
}

.tag::before {
    content: "";
    position: absolute;
    inset: 1px 2px 2px 1px;
    background: #fff;
    z-index: -1;
}

.tag.s {
    padding: 0 12px 0 6px;
    clip-path: polygon(0 0, calc(100% - 9px) 0, 100% 50%, calc(100% - 9px) 100%, 0 100%);
}

.tag.s::before {
    clip-path: polygon(0 0, calc(100% - 8px) 0, 100% 50%, calc(100% - 8px) 100%, 0 100%);
}

.tag.e {
    padding: 0 5px 0 11px;
    clip-path: polygon(9px 0, 100% 0, 100% 100%, 9px 100%, 0 50%);
}

.tag.e::before {
    clip-path: polygon(9px 0, 100% 0, 100% 100%, 9px 100%, 0 50%);
}

.tag.nar {
    letter-spacing: 0.05px;
}

.t {
    font-family: "DejaVu Sans", sans-serif;
    font-size: 13px;
    letter-spacing: 0.16px;
    color: #555;
}

.t.blue {
    color: #0e62fb;
    letter-spacing: 0;
}

.tag.s + .t {
    margin-left: -1px;
}

.tag.nar + .t {
    margin-left: -2px;
}

.sp {
    margin-left: 3px;
}

.dash {
    width: 13px;
    padding-left: 3px;
}

.main-title {
    height: 25px;
    justify-content: center;
    padding: 2px 14px 0 0;
    font-family: "DejaVu Sans", sans-serif;
    font-size: 19.5px;
    font-weight: bold;
    font-style: italic;
    color: #0a62ff;
}

.h2 {
    margin-top: 4px;
}

.num {
    width: 108px;
    margin-left: -1px;
    font-family: "DejaVu Serif", serif;
    font-size: 19px;
    font-weight: bold;
    color: #0a62ff;
    flex: none;
}

.num.sm {
    font-size: 16px;
}

.hd-text {
    font-family: "DejaVu Serif", serif;
    font-size: 19px;
    font-weight: bold;
    color: #555;
}

.hd-text.sm {
    font-size: 16px;
}

.h1 {
    height: 25px;
}

.h2 .tag {
    margin-left: 3px;
}

.centered {
    justify-content: center;
    padding-right: 14px;
}

.cap {
    font-style: italic;
}

.shift-table {
    width: 1234px;
    margin: 2px 0 0 110px;
    border-top: 1px solid #000;
    display: grid;
    grid-template-columns: 493px 1fr;
    grid-template-rows: 33px 200px;
}

.cell {
    border-left: 1px solid #000;
    border-bottom: 1px solid #000;
    padding: 8px 0 0 6px;
    font-family: "DejaVu Sans", sans-serif;
    font-size: 13px;
    font-weight: bold;
    color: #555;
}

.cell:nth-child(even) {
    border-right: 1px solid #000;
}

/* bottom */
.command {
    height: 38px;
    flex: none;
    background: #fff;
    border-top: 3px solid #6e6e6e;
    border-left: 2px solid #6e6e6e;
    border-right: 2px solid #dcdcdc;
    border-bottom: 2px solid #dcdcdc;
    display: flex;
    align-items: center;
    padding-left: 8px;
    font-size: 13px;
}

.status {
    height: 22px;
    flex: none;
    display: flex;
    justify-content: flex-end;
    align-items: center;
    padding-right: 3px;
    border-top: 1px solid #dcdcdc;
    font-size: 12px;
    color: #888;
}

.status span {
    height: 18px;
    display: flex;
    align-items: center;
    padding: 0 3px;
    border-left: 1px solid #c8c8c8;
}

.status .st-first {
    width: 82px;
    border-left: 1px solid #999;
}

.status .on {
    color: #000;
}
```
